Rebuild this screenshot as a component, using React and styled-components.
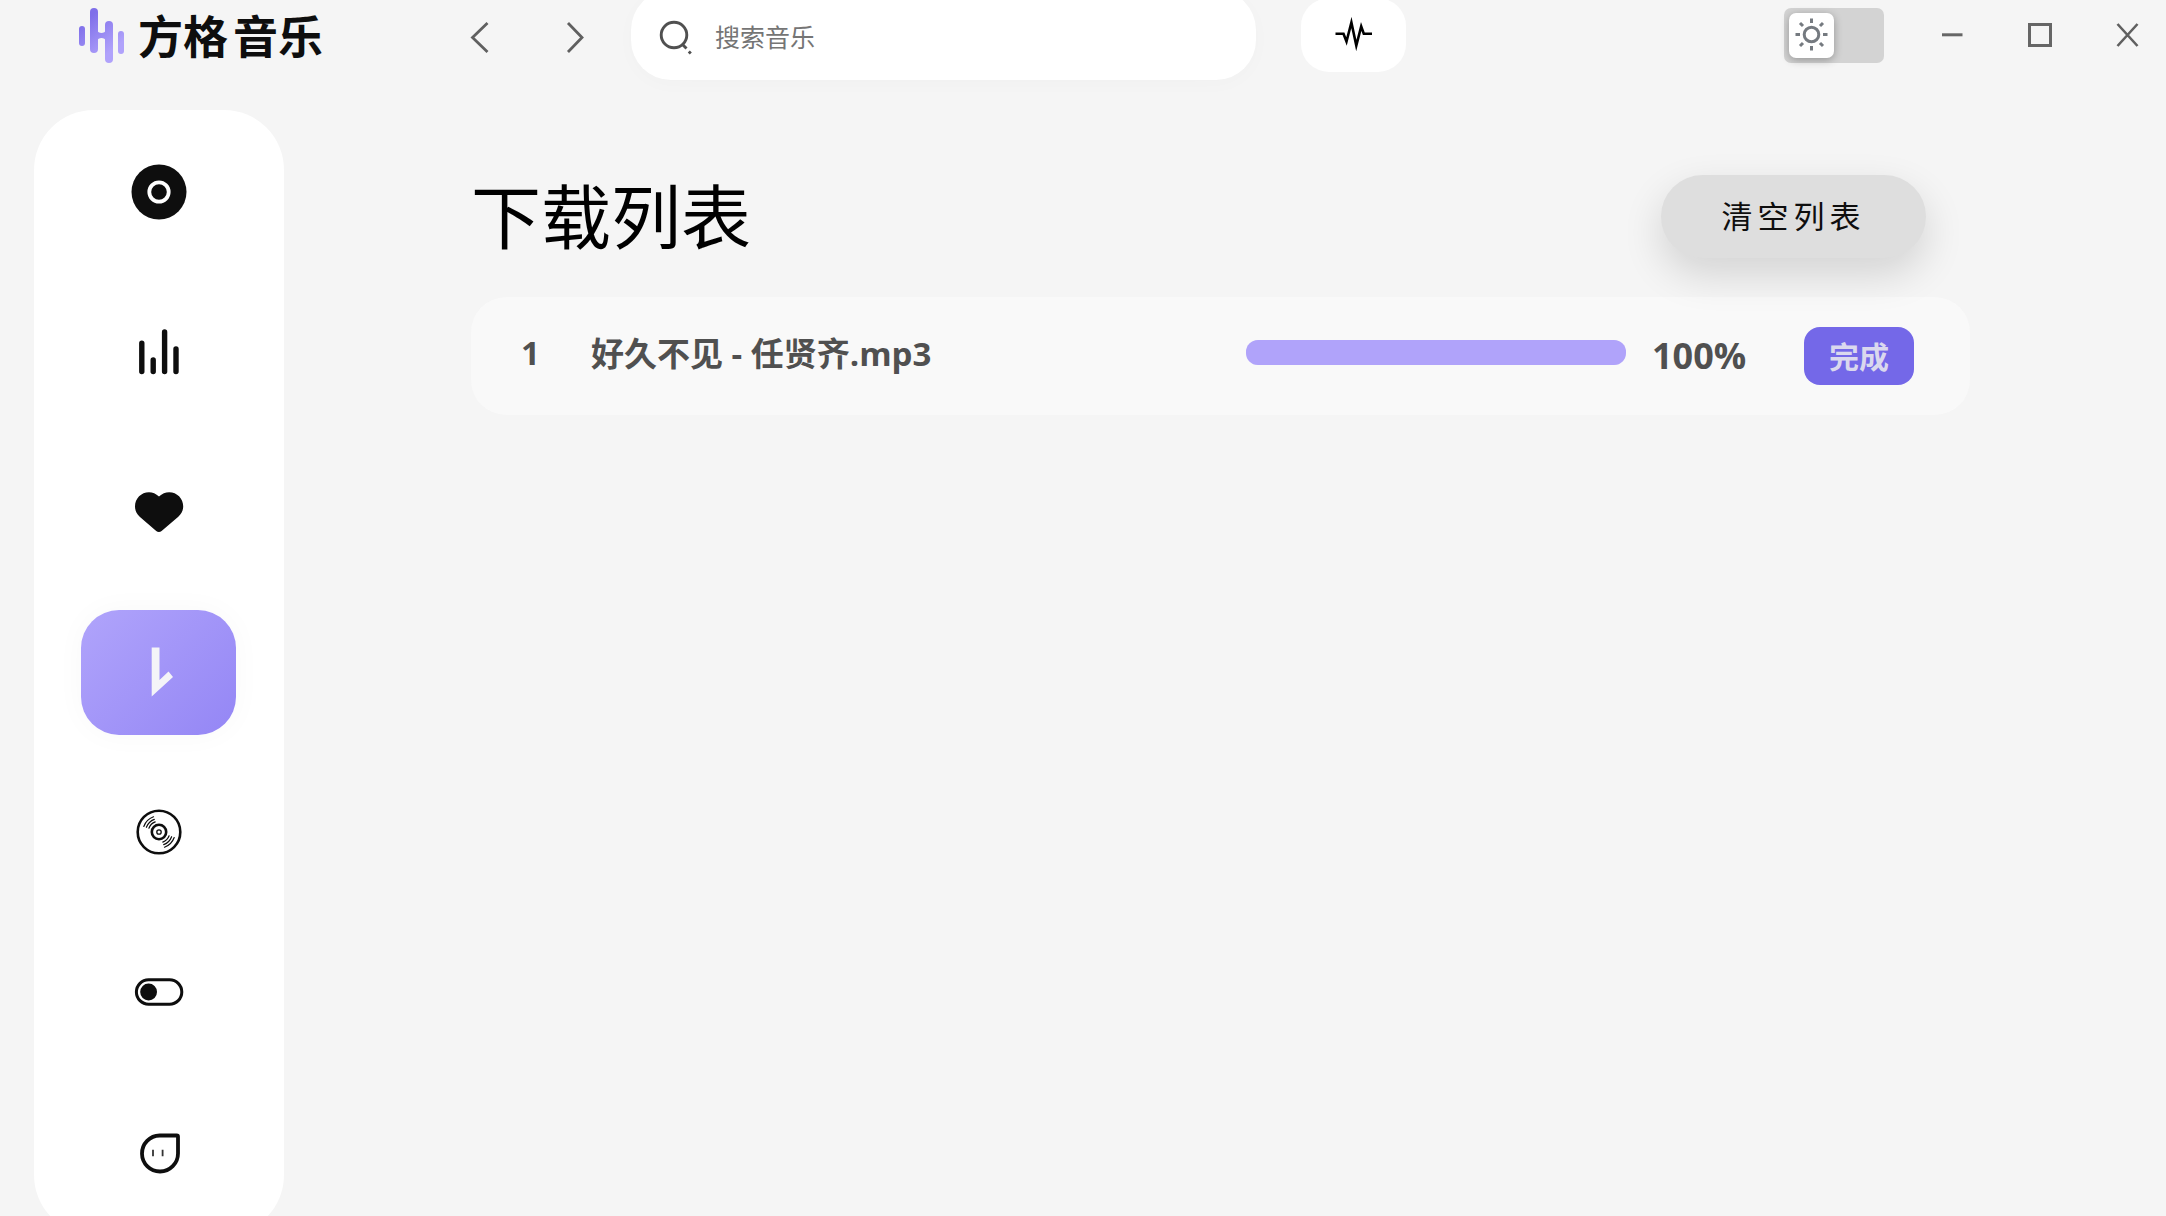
import React, { useState } from "react";
import styled, { createGlobalStyle } from "styled-components";

const downloads = [
  { id: 1, name: "好久不见 - 任贤齐.mp3", percent: 100, status: "完成" },
];

const LogoIcon = () => (
  <svg width="46" height="56" viewBox="0 0 46 56" aria-hidden="true">
    <defs>
      <linearGradient id="logo" x1="0" y1="0" x2="46" y2="56" gradientUnits="userSpaceOnUse">
        <stop offset="0.2" stopColor="#7f6fe9" />
        <stop offset="0.75" stopColor="#b0a2fb" />
      </linearGradient>
    </defs>
    <g fill="url(#logo)">
      <rect x="0" y="19" width="6" height="20" rx="3" />
      <rect x="11" y="1" width="8" height="45" rx="4" />
      <path d="M18 23C19 27 26 27 27 23V34C26 30 19 30 18 34Z" />
      <rect x="26" y="14" width="8" height="42" rx="4" />
      <rect x="39" y="24" width="6" height="23" rx="3" />
    </g>
  </svg>
);

const DiscoverIcon = () => (
  <svg width="56" height="56" viewBox="0 0 56 56" aria-hidden="true">
    <circle cx="28" cy="28" r="27.5" fill="#0e0e0e" />
    <circle cx="28" cy="28" r="9.7" fill="none" stroke="#fff" strokeWidth="3.8" />
  </svg>
);

const ChartIcon = () => (
  <svg width="56" height="56" viewBox="0 0 56 56" aria-hidden="true">
    <path
      d="M10.8 19.3V47.5M22.2 36V47.5M33.6 8V47.5M45 25V47.5"
      fill="none"
      stroke="#0e0e0e"
      strokeWidth="5.4"
      strokeLinecap="round"
    />
  </svg>
);

const HeartIcon = () => (
  <svg width="56" height="56" viewBox="0 0 56 56" aria-hidden="true">
    <path
      d="M28 12.6C25 9.7 21.5 8.3 18 8.3C10.2 8.3 4 14.6 4 22.3C4 26.5 5.6 30 8.7 32.7L25.2 47C26.8 48.4 29 48.4 30.6 47L47.3 32.7C50.4 30 52.2 26.5 52.2 22.3C52.2 14.6 46 8.3 38.2 8.3C34.5 8.3 31 9.7 28 12.6Z"
      fill="#0e0e0e"
    />
  </svg>
);

const DownloadIcon = () => (
  <svg width="56" height="56" viewBox="0 0 56 56" aria-hidden="true">
    <path d="M20.7 3.5H28.5V36L37.5 27.5L42 33L20.7 52.5Z" fill="#f4f4f8" />
  </svg>
);

const DiscIcon = () => (
  <svg width="56" height="56" viewBox="0 0 56 56" aria-hidden="true">
    <g fill="none" stroke="#0e0e0e">
      <circle cx="28" cy="28" r="21.3" strokeWidth="2.6" />
      <circle cx="28" cy="28" r="7.2" strokeWidth="2.6" />
      <circle cx="28" cy="28" r="2.2" strokeWidth="1.3" />
      <g strokeWidth="1.2" strokeLinecap="round">
        <path d="M12.8 22.5A16.2 16.2 0 0 1 22.5 12.8" />
        <path d="M15.4 23.3A13.5 13.5 0 0 1 23.3 15.4" />
        <path d="M17.9 24.2A10.8 10.8 0 0 1 24.2 17.9" />
        <path d="M43.2 33.5A16.2 16.2 0 0 1 33.5 43.2" />
        <path d="M40.6 32.7A13.5 13.5 0 0 1 32.7 40.6" />
        <path d="M38.1 31.8A10.8 10.8 0 0 1 31.8 38.1" />
      </g>
    </g>
  </svg>
);

const SettingsIcon = () => (
  <svg width="56" height="56" viewBox="0 0 56 56" aria-hidden="true">
    <rect x="5.4" y="15.8" width="45.4" height="24.4" rx="12.2" fill="none" stroke="#0e0e0e" strokeWidth="3" />
    <circle cx="17.6" cy="28" r="8.4" fill="#0e0e0e" />
  </svg>
);

const ProfileIcon = () => (
  <svg width="56" height="56" viewBox="0 0 56 56" aria-hidden="true">
    <path
      d="M28.7 11.5H45.7C46.5 11.5 47 12 47 12.8V29.5A18 18 0 1 1 28.7 11.5Z"
      fill="none"
      stroke="#0e0e0e"
      strokeWidth="3.8"
    />
    <path d="M22 25.7V32.3M31.6 25.7V32.3" stroke="#333" strokeWidth="1.8" />
  </svg>
);

const navItems = [
  { label: "发现", Icon: DiscoverIcon },
  { label: "排行", Icon: ChartIcon },
  { label: "喜欢", Icon: HeartIcon },
  { label: "下载", Icon: DownloadIcon, active: true },
  { label: "专辑", Icon: DiscIcon },
  { label: "设置", Icon: SettingsIcon },
  { label: "我的", Icon: ProfileIcon },
];

const App = () => {
  const [dark, setDark] = useState(false);
  const [keyword, setKeyword] = useState("");

  return (
    <Page>
      <GlobalStyle />
      <Header>
        <Brand>
          <LogoIcon />
          <BrandName>
            <span>方格</span>
            <span>音乐</span>
          </BrandName>
        </Brand>
        <History>
          <IconButton aria-label="后退">
            <svg width="36" height="40" viewBox="0 0 36 40">
              <path d="M26.5 8L11.5 22.5L26.5 37" fill="none" stroke="#606060" strokeWidth="2.8" />
            </svg>
          </IconButton>
          <IconButton aria-label="前进">
            <svg width="36" height="40" viewBox="0 0 36 40">
              <path d="M11 8L25 22.5L11 37" fill="none" stroke="#606060" strokeWidth="2.8" />
            </svg>
          </IconButton>
        </History>
        <Search>
          <svg width="34" height="36" viewBox="0 0 34 36" aria-hidden="true">
            <g fill="none" stroke="#505050" strokeWidth="2.9">
              <circle cx="15" cy="16" r="12.8" />
              <path d="M23.5 25.5L27.5 29.5M29.8 32.5L31.8 34.5" />
            </g>
          </svg>
          <SearchInput
            aria-label="搜索音乐"
            placeholder="搜索音乐"
            value={keyword}
            onChange={(e) => setKeyword(e.target.value)}
          />
        </Search>
        <WaveButton aria-label="听歌识曲">
          <svg width="38" height="36" viewBox="0 0 38 36">
            <path
              d="M0.5 16.7H8.5L11.5 24.5L16.4 5.5L21.3 28.5L26.2 9.5L28.8 16.7H37"
              fill="none"
              stroke="#000"
              strokeWidth="2.6"
              strokeMiterlimit="10"
            />
          </svg>
        </WaveButton>
        <WindowControls>
          <ThemeSwitch>
            <ThemeInput
              type="checkbox"
              aria-label="深色模式"
              checked={dark}
              onChange={() => setDark(!dark)}
            />
            <Knob $on={dark}>
              <svg width="34" height="34" viewBox="0 0 34 34" aria-hidden="true">
                <g fill="none" stroke="#757a80" strokeWidth="3">
                  <circle cx="16.5" cy="16.5" r="7.3" />
                  <path d="M16.5 0.5V5M16.5 28V32.5M0.5 16.5H5M28 16.5H32.5M5 5L8 8M25 25L28 28M28 5L25 8M8 25L5 28" />
                </g>
              </svg>
            </Knob>
          </ThemeSwitch>
          <WindowButtons>
            <WindowButton aria-label="最小化">
              <svg width="26" height="26" viewBox="0 0 26 26">
                <path d="M3 12.8H23.5" stroke="#666" strokeWidth="3" />
              </svg>
            </WindowButton>
            <WindowButton aria-label="最大化">
              <svg width="26" height="26" viewBox="0 0 26 26">
                <rect x="2.5" y="2.5" width="21" height="21" fill="none" stroke="#666" strokeWidth="3" />
              </svg>
            </WindowButton>
            <WindowButton aria-label="关闭">
              <svg width="26" height="26" viewBox="0 0 26 26">
                <path d="M2.5 2L22.5 24M22.5 2L2.5 24" stroke="#606060" strokeWidth="2.6" />
              </svg>
            </WindowButton>
          </WindowButtons>
        </WindowControls>
      </Header>
      <Body>
        <Sidebar>
          {navItems.map(({ label, Icon, active }) => (
            <NavButton key={label} aria-label={label} $active={active}>
              <Icon />
            </NavButton>
          ))}
        </Sidebar>
        <Main>
          <TitleBar>
            <Title>下载列表</Title>
            <ClearButton>清空列表</ClearButton>
          </TitleBar>
          <List>
            {downloads.map((item) => (
              <Row key={item.id}>
                <Index>{item.id}</Index>
                <FileName>{item.name}</FileName>
                <Track role="progressbar" aria-label={item.name} aria-valuenow={item.percent}>
                  <Fill style={{ width: `${item.percent}%` }} />
                </Track>
                <Percent>{item.percent}%</Percent>
                <StatusButton>{item.status}</StatusButton>
              </Row>
            ))}
          </List>
        </Main>
      </Body>
    </Page>
  );
};

const GlobalStyle = createGlobalStyle`
  * {
    box-sizing: border-box;
  }
  body {
    margin: 0;
    background-color: #f5f5f5;
    font-family: "Open Sans", "Noto Sans CJK SC", sans-serif;
  }
  button, input {
    font-family: inherit;
    border: none;
    padding: 0;
  }
  button {
    cursor: pointer;
  }
  svg {
    display: block;
    flex: none;
  }
`;
const Page = styled.div`
  height: 100vh;
  overflow: hidden;
  background-color: #f5f5f5;
`;
const Header = styled.header`
  display: flex;
  align-items: center;
  height: 70px;
`;
const Brand = styled.div`
  flex: none;
  display: flex;
  align-items: center;
  gap: 13px;
  width: 461px;
  padding-left: 79px;
`;
const BrandName = styled.div`
  display: flex;
  gap: 5px;
  color: #0e0e0e;
  font-family: "Noto Sans CJK SC", sans-serif;
  font-size: 45px;
  font-weight: 700;
  line-height: 56px;
`;
const History = styled.div`
  flex: none;
  display: flex;
  gap: 60px;
  margin-right: 38px;
`;
const IconButton = styled.button`
  width: 36px;
  height: 40px;
  background: none;
`;
const Search = styled.label`
  flex: 0 1 625px;
  display: flex;
  align-items: center;
  gap: 22px;
  height: 90px;
  padding: 4px 28px 0;
  border-radius: 40px;
  background-color: #fff;
  box-shadow: 0 4px 20px rgba(0, 0, 0, 0.02);
`;
const SearchInput = styled.input`
  flex: 1;
  min-width: 0;
  height: 40px;
  outline: none;
  background: none;
  color: #505050;
  font-size: 25px;
  ::placeholder {
    color: #505050;
    opacity: 1;
  }
`;
const WaveButton = styled.button`
  flex: none;
  display: flex;
  align-items: center;
  justify-content: center;
  width: 105px;
  height: 74px;
  margin-left: 45px;
  border-radius: 28px;
  background-color: #fff;
`;
const WindowControls = styled.div`
  flex: none;
  display: flex;
  align-items: center;
  gap: 44px;
  margin-left: auto;
  padding-right: 14px;
`;
const ThemeSwitch = styled.label`
  display: flex;
  width: 100px;
  height: 55px;
  padding: 5px;
  border-radius: 7px;
  background-color: #d3d3d3;
  cursor: pointer;
`;
const ThemeInput = styled.input`
  appearance: none;
  width: 0;
  margin: 0;
`;
const Knob = styled.span`
  display: flex;
  align-items: center;
  justify-content: center;
  width: 45px;
  height: 45px;
  margin-left: ${({ $on }) => ($on ? "auto" : "0")};
  border-radius: 7px;
  background-color: #fff;
  box-shadow: 0 2px 8px rgba(0, 0, 0, 0.3);
`;
const WindowButtons = styled.div`
  display: flex;
  gap: 40px;
`;
const WindowButton = styled.button`
  display: flex;
  align-items: center;
  justify-content: center;
  width: 48px;
  height: 48px;
  background: none;
`;
const Body = styled.div`
  display: flex;
  align-items: flex-start;
  padding: 40px 196px 0 34px;
`;
const Sidebar = styled.nav`
  flex: none;
  display: flex;
  flex-direction: column;
  gap: 35px;
  padding: 20px 48px 20px 47px;
  border-radius: 60px;
  background-color: #fff;
`;
const NavButton = styled.button`
  display: flex;
  align-items: center;
  justify-content: center;
  width: 155px;
  height: 125px;
  padding-bottom: 1px;
  border-radius: 38px;
  background: ${({ $active }) =>
    $active ? "linear-gradient(135deg, #b0a4fb, #9486f5)" : "none"};
  box-shadow: ${({ $active }) =>
    $active ? "0 0 30px rgba(0, 0, 0, 0.03)" : "none"};
`;
const Main = styled.main`
  flex: 1;
  min-width: 0;
  margin-left: 187px;
  padding-top: 56px;
`;
const TitleBar = styled.div`
  display: flex;
  align-items: center;
  justify-content: space-between;
  height: 101px;
  margin-bottom: 30px;
  padding-right: 44px;
`;
const Title = styled.h1`
  margin: 0;
  color: #000;
  font-size: 70px;
  font-weight: 400;
  line-height: 102px;
`;
const ClearButton = styled.button`
  width: 265px;
  height: 83px;
  padding-bottom: 4px;
  border-radius: 42px;
  background-color: #dedede;
  box-shadow: 0 16px 40px rgba(0, 0, 0, 0.14);
  color: #0e0e0e;
  font-size: 31px;
  font-weight: 400;
  letter-spacing: 5px;
`;
const List = styled.ul`
  margin: 0;
  padding: 0;
  list-style: none;
`;
const Row = styled.li`
  display: flex;
  align-items: center;
  height: 118px;
  padding: 0 56px 0 50px;
  border-radius: 35px;
  background-color: rgba(249, 249, 249, 0.85);
  color: #505050;
  font-size: 33px;
  font-weight: 700;
`;
const Index = styled.span`
  flex: none;
  width: 70px;
  padding-bottom: 8px;
`;
const FileName = styled.span`
  flex: 1;
  min-width: 0;
  padding-bottom: 8px;
  overflow: hidden;
  white-space: nowrap;
  text-overflow: ellipsis;
`;
const Track = styled.div`
  flex: none;
  width: 380px;
  height: 25px;
  margin-bottom: 8px;
  border-radius: 12px;
  background-color: #e2ddfc;
`;
const Fill = styled.div`
  height: 100%;
  border-radius: 12px;
  background-color: #b0a3fa;
`;
const Percent = styled.span`
  flex: none;
  width: 152px;
  margin-left: 26px;
  padding-bottom: 2px;
  font-size: 36px;
`;
const StatusButton = styled.button`
  flex: none;
  width: 110px;
  height: 58px;
  padding-bottom: 2px;
  border-radius: 16px;
  background-color: #7468e8;
  color: #dad8ee;
  font-size: 30px;
  font-weight: 700;
`;

export default App;
